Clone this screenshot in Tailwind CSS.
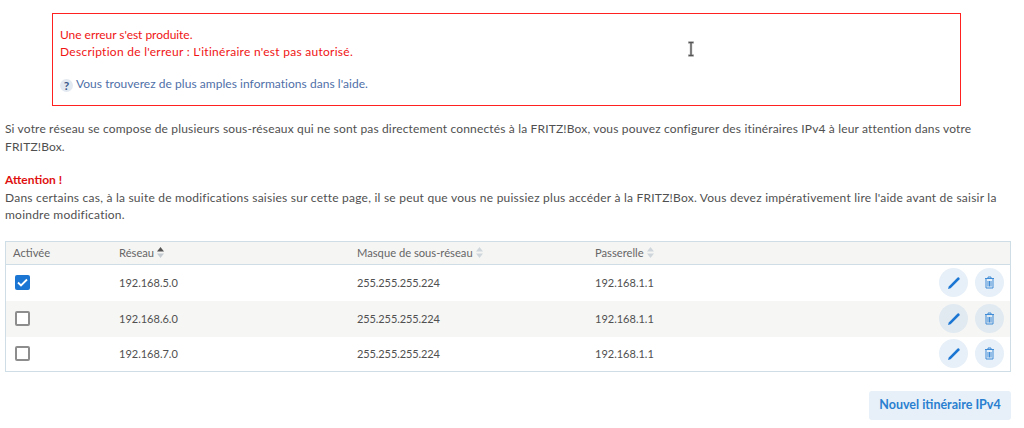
<!doctype html>
<html lang="fr">
    <head>
        <meta charset="UTF-8">
        <title>Itinéraires IPv4</title>
        <script src="https://cdn.jsdelivr.net/npm/@tailwindcss/browser@4"></script>
    </head>
    <body class="bg-white font-['Lato','Noto_Sans',sans-serif] text-[12px] leading-[17.5px] text-[#505050] overflow-hidden">

        <div class="relative h-[428px] pt-[13px] px-[5px]">

            <!-- ERROR BOX -->
            <div class="ml-[47px] w-[909px] h-[93px] border border-[#ff2020] pt-[12px] pl-[7px] leading-[17px] text-[#f01414]">
                <p class="tracking-[-0.04px]">Une erreur s'est produite.</p>
                <p class="tracking-[0.27px]">Description de l'erreur : L'itinéraire n'est pas autorisé.</p>
                <p class="mt-[15px] flex items-center gap-[3px] text-[#4f6fa8] tracking-[0.04px]">
                    <span class="flex items-center justify-center w-[13px] h-[13px] mt-[3px] rounded-full bg-[#e3e9f0] text-[#3d5a8c] text-[12px] font-bold">?</span>
                    <span>Vous trouverez de plus amples informations dans l'aide.</span>
                </p>
            </div>

            <!-- CURSOR -->
            <svg class="absolute left-[686px] top-[41px]" width="10" height="16" viewBox="0 0 10 16">
                <path d="M2 1.5h6M2 14.5h6M5 1.5v13" fill="none" stroke="#ddd" stroke-width="3"/>
                <path d="M2.5 1.5h5M2.5 14.5h5M5 1.5v13" fill="none" stroke="#555" stroke-width="1.4"/>
            </svg>

            <!-- TEXT -->
            <p class="mt-[14px] tracking-[0.16px]">Si votre réseau se compose de plusieurs sous-réseaux qui ne sont pas directement connectés à la FRITZ!Box, vous pouvez configurer des itinéraires IPv4 à leur attention dans votre FRITZ!Box.</p>
            <p class="mt-[16px] font-bold text-[#e01010]">Attention !</p>
            <p class="tracking-[0.23px]">Dans certains cas, à la suite de modifications saisies sur cette page, il se peut que vous ne puissiez plus accéder à la FRITZ!Box. Vous devez impérativement lire l'aide avant de saisir la moindre modification.</p>

            <!-- TABLE -->
            <div class="mt-[17px] w-[1006px] border border-[#cfdde6] text-[11px]">
                <div class="grid grid-cols-[106px_238px_238px_1fr_auto] items-center h-[23px] bg-[#f5f5f4] border-b border-[#cfdde6] pl-[7px] text-[#666] text-[11.2px]">
                    <span>Activée</span>
                    <span class="flex items-center gap-[3px]">Réseau
                        <svg width="7" height="11" viewBox="0 0 7 11"><path d="M3.5 0L7 4.5H0z" fill="#555"/><path d="M3.5 11L7 6.5H0z" fill="#c4ccd2"/></svg>
                    </span>
                    <span class="flex items-center gap-[3px]">Masque de sous-réseau
                        <svg width="7" height="11" viewBox="0 0 7 11"><path d="M3.5 0L7 4.5H0zM3.5 11L7 6.5H0z" fill="#d0d7dc"/></svg>
                    </span>
                    <span class="flex items-center gap-[3px]">Passerelle
                        <svg width="7" height="11" viewBox="0 0 7 11"><path d="M3.5 0L7 4.5H0zM3.5 11L7 6.5H0z" fill="#d0d7dc"/></svg>
                    </span>
                </div>

                <!-- ROW 1 -->
                <div class="grid grid-cols-[104px_238px_238px_1fr_auto] items-center h-[36px] pl-[9px] pr-[6px]">
                    <span class="flex items-center justify-center w-[15px] h-[15px] rounded-[2px] bg-[#1b76d3]">
                        <svg width="11" height="9" viewBox="0 0 11 9"><path d="M1 4.5L4 7.5L10 1.5" fill="none" stroke="#fff" stroke-width="1.8"/></svg>
                    </span>
                    <span>192.168.5.0</span>
                    <span class="tracking-[-0.1px]">255.255.255.224</span>
                    <span>192.168.1.1</span>
                    <span class="flex gap-[7px]">
                        <span class="flex items-center justify-center w-[29px] h-[29px] rounded-full bg-[#e7f0f8]">
                            <svg width="14" height="14" viewBox="0 0 14 14"><path d="M1 13l.8-2.6L10.6 1.6a1 1 0 0 1 1.4 0l.4.4a1 1 0 0 1 0 1.4L3.6 12.2z" fill="#1b76d3"/></svg>
                        </span>
                        <span class="flex items-center justify-center w-[29px] h-[29px] rounded-full bg-[#e7f0f8]">
                            <svg width="11" height="13" viewBox="0 0 11 13"><path d="M1 2.5h9M4 2.5V1h3v1.5M2 3v9h7V3M4 5v5.5M5.5 5v5.5M7 5v5.5" fill="none" stroke="#3f8bd6" stroke-width="1"/></svg>
                        </span>
                    </span>
                </div>

                <!-- ROW 2 -->
                <div class="grid grid-cols-[104px_238px_238px_1fr_auto] items-center h-[36px] pl-[9px] pr-[6px] bg-[#f6f6f5]">
                    <span class="w-[15px] h-[15px] rounded-[2px] border-2 border-[#8d8d8d] bg-white"></span>
                    <span>192.168.6.0</span>
                    <span class="tracking-[-0.1px]">255.255.255.224</span>
                    <span>192.168.1.1</span>
                    <span class="flex gap-[7px]">
                        <span class="flex items-center justify-center w-[29px] h-[29px] rounded-full bg-[#e1eaf1]">
                            <svg width="14" height="14" viewBox="0 0 14 14"><path d="M1 13l.8-2.6L10.6 1.6a1 1 0 0 1 1.4 0l.4.4a1 1 0 0 1 0 1.4L3.6 12.2z" fill="#1b76d3"/></svg>
                        </span>
                        <span class="flex items-center justify-center w-[29px] h-[29px] rounded-full bg-[#e1eaf1]">
                            <svg width="11" height="13" viewBox="0 0 11 13"><path d="M1 2.5h9M4 2.5V1h3v1.5M2 3v9h7V3M4 5v5.5M5.5 5v5.5M7 5v5.5" fill="none" stroke="#3f8bd6" stroke-width="1"/></svg>
                        </span>
                    </span>
                </div>

                <!-- ROW 3 -->
                <div class="grid grid-cols-[104px_238px_238px_1fr_auto] items-center h-[34px] pl-[9px] pr-[6px]">
                    <span class="w-[15px] h-[15px] rounded-[2px] border-2 border-[#8d8d8d] bg-white"></span>
                    <span>192.168.7.0</span>
                    <span class="tracking-[-0.1px]">255.255.255.224</span>
                    <span>192.168.1.1</span>
                    <span class="flex gap-[7px]">
                        <span class="flex items-center justify-center w-[29px] h-[29px] rounded-full bg-[#e7f0f8]">
                            <svg width="14" height="14" viewBox="0 0 14 14"><path d="M1 13l.8-2.6L10.6 1.6a1 1 0 0 1 1.4 0l.4.4a1 1 0 0 1 0 1.4L3.6 12.2z" fill="#1b76d3"/></svg>
                        </span>
                        <span class="flex items-center justify-center w-[29px] h-[29px] rounded-full bg-[#e7f0f8]">
                            <svg width="11" height="13" viewBox="0 0 11 13"><path d="M1 2.5h9M4 2.5V1h3v1.5M2 3v9h7V3M4 5v5.5M5.5 5v5.5M7 5v5.5" fill="none" stroke="#3f8bd6" stroke-width="1"/></svg>
                        </span>
                    </span>
                </div>
            </div>

            <!-- BUTTON -->
            <div class="mt-[19px] w-[1006px] flex justify-end">
                <button class="h-[29px] w-[142px] rounded-[3px] bg-[#e7f0f8] text-[#2a7fd0] text-[12.5px] font-bold">Nouvel itinéraire IPv4</button>
            </div>
        </div>
    </body>
</html>
